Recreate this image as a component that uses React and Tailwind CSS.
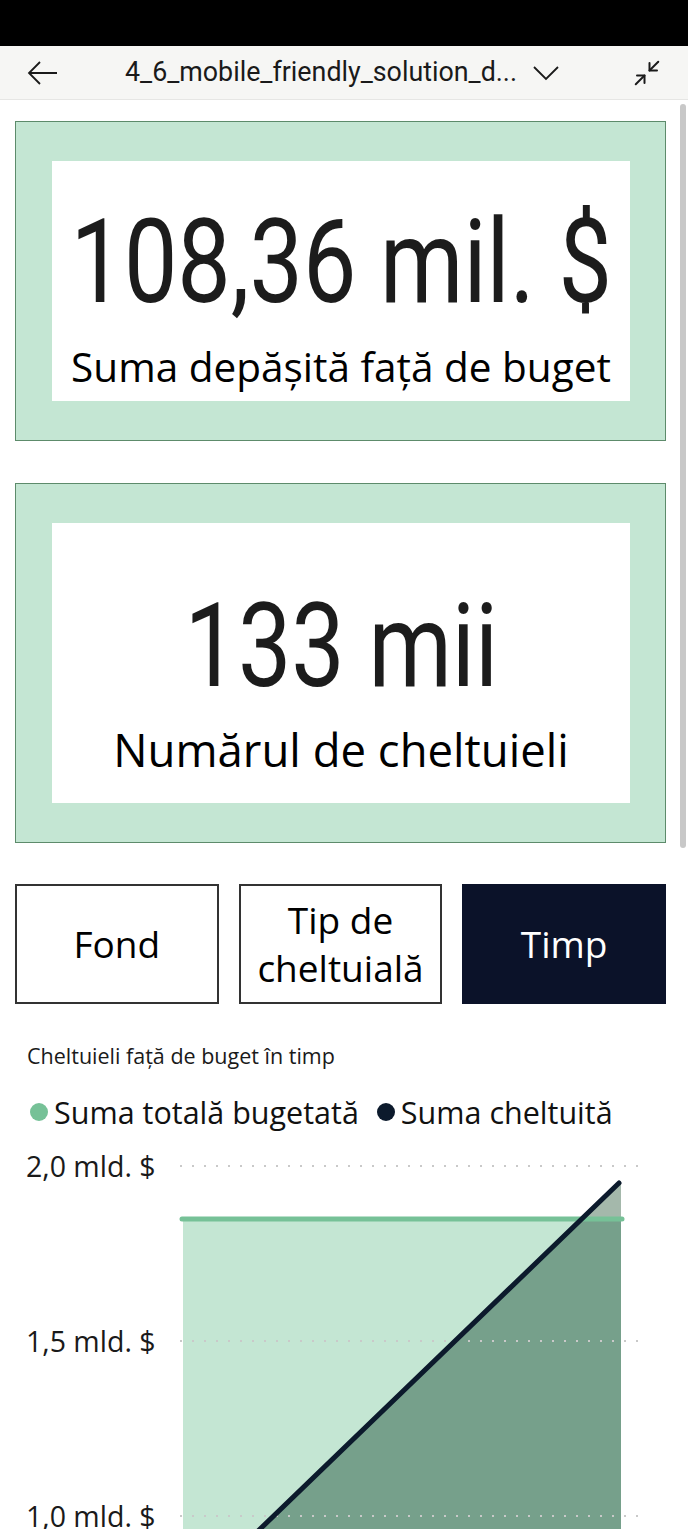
import { Minimize2 } from 'lucide-react';

const SANS = { fontFamily: '"Open Sans", "Noto Sans", sans-serif' };
const DIN = { fontFamily: 'Roboto, "DejaVu Sans", sans-serif' };

function Header() {
    return (
        <div className="h-[54px] bg-[#f6f6f4] border-b border-[#e6e6e4] flex items-center">
            <svg width="32" height="24" viewBox="0 0 32 24" className="ml-[27px]">
                <path d="M30 12H2M13 1L2 12l11 11" fill="none" stroke="#1a1a1a" strokeWidth="1.8" />
            </svg>
            <div className="ml-[66px] text-[26.8px] text-[#1a1a1a] leading-none" style={DIN}>
                4_6_mobile_friendly_solution_d...
            </div>
            <svg width="26" height="16" viewBox="0 0 26 16" className="ml-[16px]">
                <path d="M1 2l12 12L25 2" fill="none" stroke="#1a1a1a" strokeWidth="1.8" />
            </svg>
            <Minimize2 size={30} strokeWidth={1.6} color="#1a1a1a" className="ml-auto mr-[26px]" />
        </div>
    );
}

function KpiCard({ value, label, height, labelSize, padTop, gap }) {
    return (
        <div
            className="bg-[#c4e6d3] border-[1.5px] border-[#5d8b6b] pl-[36px] pr-[35px] py-[39px]"
            style={{ height }}
        >
            <div className="bg-white h-full flex flex-col items-center" style={{ paddingTop: padTop }}>
                <div className="text-[116px] leading-[120px] text-[#1c1c1c] whitespace-nowrap" style={DIN}>
                    <span className="inline-block scale-x-[0.82]">{value}</span>
                </div>
                <div
                    className="text-black whitespace-nowrap leading-[56px]"
                    style={{ ...SANS, fontSize: labelSize, marginTop: gap }}
                >
                    {label}
                </div>
            </div>
        </div>
    );
}

function Tabs() {
    const tabs = [
        { label: 'Fond', active: false },
        { label: 'Tip de cheltuială', active: false, two: true },
        { label: 'Timp', active: true },
    ];
    return (
        <div className="grid grid-cols-3 gap-[20px] h-[120px]">
            {tabs.map((t) => (
                <div
                    key={t.label}
                    className={
                        t.active
                            ? 'bg-[#0b1229] text-white flex items-center justify-center text-[37px] leading-[48px]'
                            : 'border-2 border-[#333] bg-white text-black flex items-center justify-center text-center text-[37px] leading-[48px] px-2'
                    }
                    style={SANS}
                >
                    {t.two ? (
                        <span>
                            Tip de
                            <br />
                            cheltuială
                        </span>
                    ) : (
                        t.label
                    )}
                </div>
            ))}
        </div>
    );
}

function Chart() {
    // plot area in px, relative to the svg
    const bx1 = 183;
    const bx2 = 621;
    const budgetY = 78;
    const ix = 581.5;
    return (
        <svg width="688" height="390" viewBox="0 0 688 390" className="block">
            <rect x={bx1} y={budgetY} width={bx2 - bx1} height={400} fill="#c4e6d3" />
            <polygon points={`258,390 ${ix},${budgetY} ${bx2},${budgetY} ${bx2},390`} fill="#76a08b" />
            <polygon points={`${ix},${budgetY} ${bx2},40 ${bx2},${budgetY}`} fill="#a4b8ab" />
            {[25, 200, 375].map((y) => (
                <line
                    key={y}
                    x1="180"
                    x2="640"
                    y1={y}
                    y2={y}
                    stroke="#c9c9c9"
                    strokeWidth="2"
                    strokeDasharray="2 10"
                />
            ))}
            <line x1={182} x2={622} y1={budgetY} y2={budgetY} stroke="#76c197" strokeWidth="5" strokeLinecap="round" />
            <line x1="257" y1="391" x2="619" y2="42" stroke="#0c1a2c" strokeWidth="5" strokeLinecap="round" />
            <g style={SANS} fontSize="28.5" fill="#1a1a1a">
                <text x="26" y="36">2,0 mld. $</text>
                <text x="26" y="211">1,5 mld. $</text>
                <text x="26" y="386">1,0 mld. $</text>
            </g>
        </svg>
    );
}

export default function App() {
    return (
        <div className="w-[688px] h-[1529px] overflow-hidden bg-white relative">
            <div className="h-[46px] bg-black" />
            <Header />
            <div className="ml-[15px] mt-[21px] w-[651px]">
                <KpiCard
                    value="108,36 mil. $"
                    label="Suma depășită față de buget"
                    height={320}
                    labelSize={40.5}
                    padTop={41}
                    gap={17}
                />
                <div className="h-[42px]" />
                <KpiCard
                    value="133 mii"
                    label="Numărul de cheltuieli"
                    height={360}
                    labelSize={45.5}
                    padTop={63}
                    gap={15}
                />
                <div className="h-[41px]" />
                <Tabs />
            </div>
            <div className="pl-[27px] mt-[40px] text-[21.5px] leading-[24px] text-[#1a1a1a]" style={SANS}>
                Cheltuieli față de buget în timp
            </div>
            <div className="pl-[30px] mt-[26px] flex items-center text-[30.5px] leading-[36px] text-[#111]" style={SANS}>
                <span className="w-[18px] h-[18px] rounded-full bg-[#76c197] mr-[6px]" />
                <span>Suma totală bugetată</span>
                <span className="w-[18px] h-[18px] rounded-full bg-[#0c1a2c] ml-[18px] mr-[6px]" />
                <span>Suma cheltuită</span>
            </div>
            <div className="mt-[11px]">
                <Chart />
            </div>
            <div className="absolute right-[2px] top-[104px] w-[6px] h-[744px] rounded-full bg-[#c8c8c8]" />
        </div>
    );
}
